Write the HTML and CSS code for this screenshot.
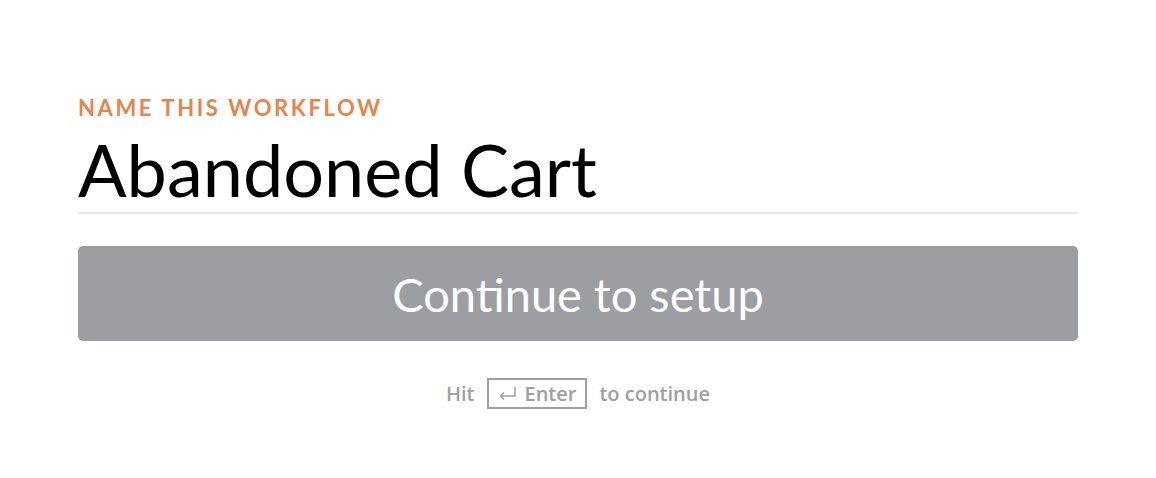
FILE: index.html
```html
<!DOCTYPE html>
<html>
<head>
<meta charset="utf-8">
<link rel="stylesheet" href="styles.css">
</head>
<body>
<main class="page">
  <form class="workflow">
    <label class="label">Name this workflow</label>
    <div class="name">Abandoned Cart</div>
    <button type="button" class="continue">Continue to setup</button>
    <div class="hint"><span>Hit</span><span class="key"><svg class="arrow" width="17" height="11" viewBox="0 0 17 11"><path d="M16 0V9H1.5M5 5.5L1.5 9L5 12.5" fill="none" stroke="#a0a0a0" stroke-width="1.5"/></svg>Enter</span><span>to continue</span></div>
  </form>
</main>
</body>
</html>
```
FILE: styles.css
```css
html, body { margin: 0; padding: 0; background: #fff; }
.page { padding: 94px 78px 0 78px; }
.workflow { width: 1000px; display: flex; flex-direction: column; }
.label {
  font-family: Lato, "Liberation Sans", sans-serif;
  font-weight: 700;
  font-size: 22px;
  letter-spacing: 2.6px;
  text-transform: uppercase;
  color: #e8834a;
  line-height: 28px;
}
.name {
  font-family: Lato, "Liberation Sans", sans-serif;
  font-size: 72px;
  line-height: 86px;
  color: #000;
  margin-top: 4px;
  border-bottom: 2px solid #e6e8ec;
  border-radius: 1px;
}
.continue {
  margin-top: 32px;
  height: 95px;
  border: 0;
  border-radius: 5px;
  background: #9d9ea3;
  color: #fff;
  font-family: Lato, "Liberation Sans", sans-serif;
  font-size: 47px;
  padding: 0;
}
.hint {
  margin-top: 37px;
  display: flex;
  justify-content: center;
  align-items: center;
  gap: 12px;
  font-family: "Open Sans", sans-serif;
  font-weight: 600;
  font-size: 20px;
  color: #a0a0a0;
  height: 31px;
}
.key {
  display: flex;
  align-items: center;
  gap: 9px;
  border: 2px solid #a0a0a0;
  padding: 0 9px 0 10px;
  height: 27px;
  line-height: 27px;
}
.arrow { display: block; margin-top: -2px; overflow: visible; }
```
